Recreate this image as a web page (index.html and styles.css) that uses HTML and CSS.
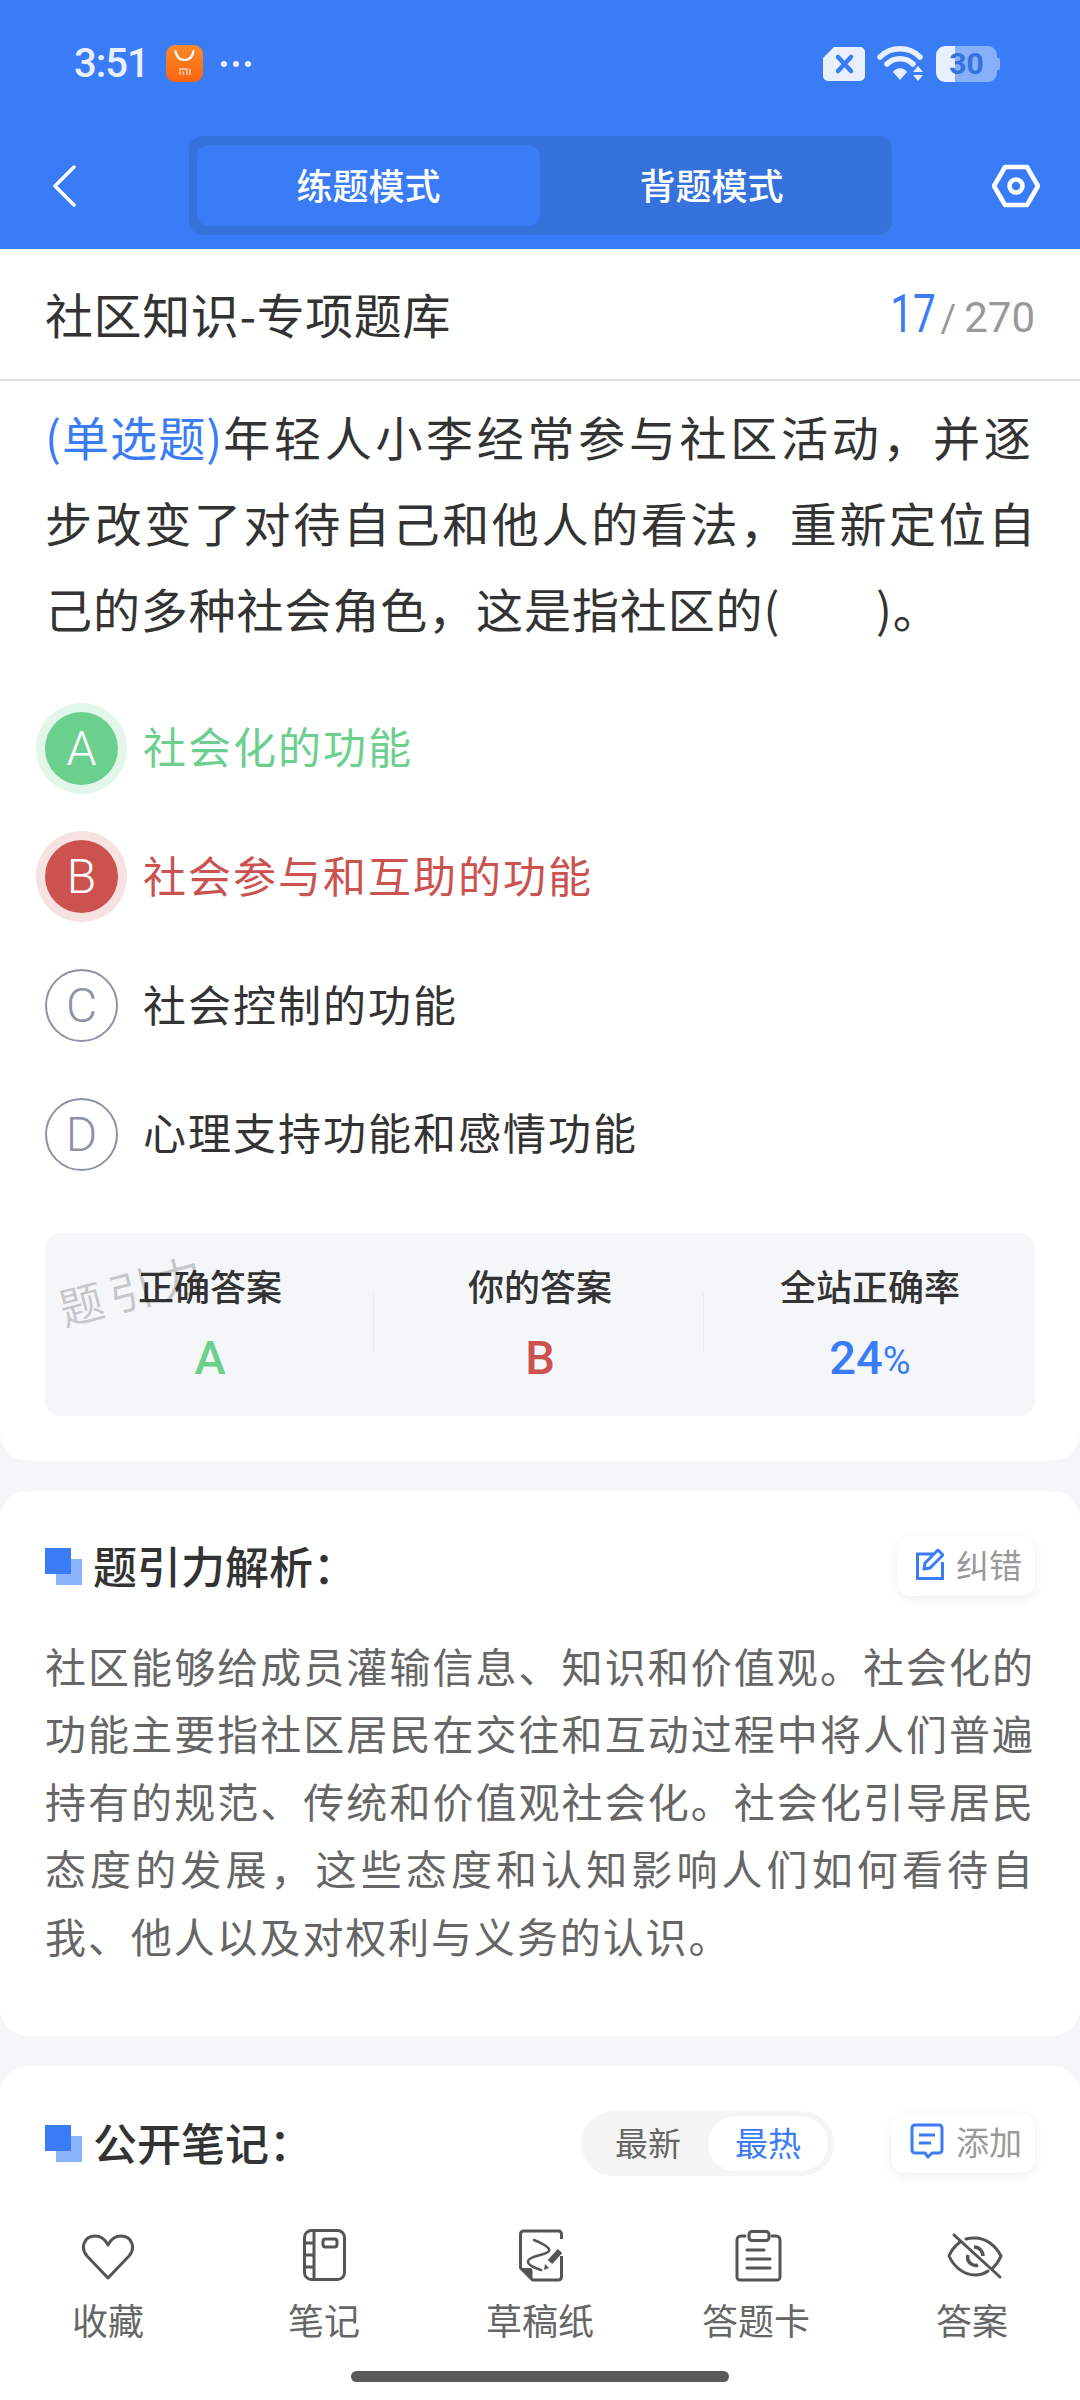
FILE: index.html
```html
<!DOCTYPE html>
<html>

<head>
	<title>社区知识-专项题库</title>
	<link rel="stylesheet" href="styles.css">
</head>

<body>
	<div class="page">
		<header class="top">
			<div class="statusbar">
				<div class="status-left">
					<span class="time">3:51</span>
					<svg class="mi-icon" width="37" height="37" viewBox="0 0 37 37">
						<defs>
							<linearGradient id="miFill" x1="0" y1="0" x2="0" y2="1">
								<stop offset="0" stop-color="#f98a2c" />
								<stop offset="1" stop-color="#fa6410" />
							</linearGradient>
						</defs>
						<rect width="37" height="37" rx="9" fill="url(#miFill)" />
						<path d="M9.500 6c1 6 4.500 9 9 9s8-3 9-9" fill="none" stroke="#fff" stroke-width="2.200" stroke-linecap="round" />
						<path d="M14 30v-6h7v6M17.500 26.500V30M24 24v6" fill="none" stroke="#ffd9b8" stroke-width="1.400" />
					</svg>
					<svg class="more-dots" width="32" height="8" viewBox="0 0 32 8">
						<circle cx="4" cy="4" r="3" fill="#e8effd" />
						<circle cx="16" cy="4" r="3" fill="#e8effd" />
						<circle cx="28" cy="4" r="3" fill="#e8effd" />
					</svg>
				</div>
				<div class="status-right">
					<svg width="44" height="36" viewBox="0 0 44 36">
						<path d="M12 1h26a5 5 0 0 1 5 5v24a5 5 0 0 1-5 5H6a5 5 0 0 1-5-5V12z" fill="#e8effd" />
						<path d="M16 11l13 14M29 11L16 25" stroke="#3a7cf6" stroke-width="4.500" stroke-linecap="round" />
					</svg>
					<svg width="48" height="36" viewBox="0 0 48 36">
						<path d="M3 11C14 0 32 0 43 11" fill="none" stroke="#e8effd" stroke-width="5.500" stroke-linecap="round" />
						<path d="M10 18c7-7 19-7 26 0" fill="none" stroke="#e8effd" stroke-width="5.500" stroke-linecap="round" />
						<path d="M16 26c4-5 10-5 14 0l-7 8z" fill="#e8effd" />
						<path d="M36 26l5-6 5 6zM36 29l5 6 5-6z" fill="#e8effd" />
					</svg>
					<div class="battery">30</div>
				</div>
			</div>
			<nav class="navbar">
				<svg class="back" width="24" height="42" viewBox="0 0 24 42">
					<path d="M22 2L3 21l19 19" fill="none" stroke="#fff" stroke-width="3.500" stroke-linecap="round" stroke-linejoin="round" />
				</svg>
				<div class="mode-tabs">
					<div class="mode-tab mode-tab-on">练题模式</div>
					<div class="mode-tab">背题模式</div>
				</div>
				<svg class="gear" width="48" height="44" viewBox="0 0 48 44">
					<path d="M13 3h22l11 19-11 19H13L2 22z" fill="none" stroke="#fff" stroke-width="4.500" stroke-linejoin="round" />
					<circle cx="24" cy="22" r="6.500" fill="none" stroke="#fff" stroke-width="4.500" />
				</svg>
			</nav>
		</header>

		<section class="card card-question">
			<div class="subhead">
				<span class="bank-title">社区知识-专项题库</span>
				<span class="counter"><b>17</b><i>/</i>270</span>
			</div>
			<p class="question">
				<span class="qline qline-1"><span class="qtype">(单选题)</span>年轻人小李经常参与社区活动，并逐</span>
				<span class="qline qline-2">步改变了对待自己和他人的看法，重新定位自</span>
				<span class="qline qline-3">己的多种社会角色，这是指社区的(　　)。</span>
			</p>
			<ul class="options">
				<li class="option right"><span class="badge">A</span><span class="option-text">社会化的功能</span></li>
				<li class="option wrong"><span class="badge">B</span><span class="option-text">社会参与和互助的功能</span></li>
				<li class="option"><span class="badge">C</span><span class="option-text">社会控制的功能</span></li>
				<li class="option"><span class="badge">D</span><span class="option-text">心理支持功能和感情功能</span></li>
			</ul>
			<div class="stats">
				<div class="stat">
					<div class="stat-label">正确答案</div>
					<div class="stat-value green">A</div>
				</div>
				<div class="stat">
					<div class="stat-label">你的答案</div>
					<div class="stat-value red">B</div>
				</div>
				<div class="stat">
					<div class="stat-label">全站正确率</div>
					<div class="stat-value blue">24<small>%</small></div>
				</div>
				<span class="watermark">题引力</span>
			</div>
		</section>

		<section class="card card-analysis">
			<div class="section-head">
				<h2 class="section-title"><span class="squares"></span>题引力解析：</h2>
				<div class="chip">
					<svg width="28" height="32" viewBox="0 0 28 32">
						<path d="M17 6H1.500v24.500h25V14" fill="none" stroke="#3a7cf6" stroke-width="3" />
						<path d="M9 15L22 2l5 5-13 13-6 1z" fill="none" stroke="#3a7cf6" stroke-width="3" stroke-linejoin="round" />
					</svg>
					纠错
				</div>
			</div>
			<p class="analysis">社区能够给成员灌输信息、知识和价值观。社会化的功能主要指社区居民在交往和互动过程中将人们普遍持有的规范、传统和价值观社会化。社会化引导居民态度的发展，这些态度和认知影响人们如何看待自我、他人以及对权利与义务的认识。</p>
		</section>

		<section class="card card-notes">
			<div class="section-head">
				<h2 class="section-title"><span class="squares"></span>公开笔记：</h2>
				<div class="notes-tools">
					<div class="sort">
						<span class="sort-item">最新</span>
						<span class="sort-item sort-on">最热</span>
					</div>
					<div class="chip">
						<svg width="34" height="36" viewBox="0 0 34 36">
							<path d="M5 2h24a3 3 0 0 1 3 3v22a3 3 0 0 1-3 3h-7l-4 4-3-4H5a3 3 0 0 1-3-3V5a3 3 0 0 1 3-3z" fill="none" stroke="#3a7cf6" stroke-width="3" stroke-linejoin="round" />
							<path d="M9 12h16M9 20h12" stroke="#3a7cf6" stroke-width="3" />
						</svg>
						添加
					</div>
				</div>
			</div>
		</section>

		<footer class="tabbar">
			<div class="tab">
				<svg width="54" height="54" viewBox="0 0 54 54">
					<path d="M27 50L6 28C-1 20 3 8 14 8c6 0 10 3 13 9 3-6 7-9 13-9 11 0 15 12 8 20z" fill="none" stroke="#555" stroke-width="3" stroke-linejoin="round" />
				</svg>
				<span>收藏</span>
			</div>
			<div class="tab">
				<svg width="54" height="54" viewBox="0 0 54 54">
					<rect x="7.500" y="2.500" width="40" height="49" rx="7" fill="none" stroke="#555" stroke-width="3" />
					<path d="M17 2.500v49M7.500 15H17M7.500 27H17M7.500 39H17" stroke="#555" stroke-width="3" />
					<rect x="26" y="11" width="14" height="8" rx="2.500" fill="none" stroke="#555" stroke-width="3" />
				</svg>
				<span>笔记</span>
			</div>
			<div class="tab">
				<svg width="54" height="54" viewBox="0 0 54 54">
					<path d="M48.500 11V6a3 3 0 0 0-3-3H10.500a3 3 0 0 0-3 3v34l12 12h26a3 3 0 0 0 3-3V28" fill="none" stroke="#555" stroke-width="3" stroke-linejoin="round" />
					<path d="M7.500 40h9a3 3 0 0 1 3 3v9z" fill="#555" />
					<path d="M21 12c8 3 17 8 15 11-2 4-20 5-21 10-1 4 7 7 13 9" fill="none" stroke="#555" stroke-width="2.500" stroke-linecap="round" />
					<path d="M47 23L37 34" stroke="#555" stroke-width="6" />
					<path d="M32 36l4 4-5 2z" fill="#555" />
				</svg>
				<span>草稿纸</span>
			</div>
			<div class="tab">
				<svg width="54" height="54" viewBox="0 0 54 54">
					<path d="M16 8h-4a4 4 0 0 0-4 4v37a3 3 0 0 0 3 3h37a3 3 0 0 0 3-3V12a4 4 0 0 0-4-4h-4" fill="none" stroke="#555" stroke-width="3" stroke-linecap="round" />
					<rect x="20" y="3.500" width="20" height="9" rx="3" fill="none" stroke="#555" stroke-width="3" />
					<path d="M18 22h17M18 31h23M18 40h23" stroke="#555" stroke-width="3" stroke-linecap="round" />
				</svg>
				<span>答题卡</span>
			</div>
			<div class="tab">
				<svg class="eye" width="58" height="54" viewBox="0 0 58 54">
					<path d="M14 14C9 18 5 23 3 28c5 11 15 19 26 19 5 0 9-1 13-4" fill="none" stroke="#555" stroke-width="3" stroke-linecap="round" />
					<path d="M20 11c3-1 6-1 9-1 11 0 21 8 26 18-2 5-5 9-9 13" fill="none" stroke="#555" stroke-width="3" stroke-linecap="round" />
					<path d="M22 27a8 8 0 0 0 10 10M28 19a9 9 0 0 1 9 9" fill="none" stroke="#555" stroke-width="3.500" />
					<path d="M8 7l46 42" stroke="#555" stroke-width="3" stroke-linecap="round" />
				</svg>
				<span>答案</span>
			</div>
			<div class="home-bar"></div>
		</footer>
	</div>
</body>

</html>
```

FILE: styles.css
```css
* {
	box-sizing: border-box;
}

body {
	margin: 0;
	font-family: "Noto Sans CJK SC", "Noto Sans", sans-serif;
	color: #333;
	background: #f4f6f8;
}

.page {
	width: 1080px;
	height: 2400px;
	overflow: hidden;
	display: flex;
	flex-direction: column;
}

/* header */
.top {
	height: 249px;
	flex: none;
	background: #3a7cf6;
	color: #fff;
}

.statusbar {
	height: 126px;
	padding: 45px 80px 0 74px;
	display: flex;
	justify-content: space-between;
	align-items: flex-start;
}

.status-left,
.status-right {
	display: flex;
	align-items: center;
	height: 37px;
}

.time {
	font-family: Roboto, sans-serif;
	font-size: 40px;
	font-weight: 500;
	letter-spacing: -1px;
	color: #e8effd;
	width: 92px;
}

.more-dots {
	margin-left: 17px;
}

.status-right {
	gap: 11px;
}

.battery {
	position: relative;
	width: 61px;
	height: 36px;
	margin-right: 3px;
	border-radius: 9px;
	background: linear-gradient(90deg, #e8effd 19px, #86b0fa 19px);
	font-family: Roboto, sans-serif;
	font-size: 30px;
	font-weight: 700;
	color: #3672dc;
	text-align: center;
	line-height: 36px;
}

.battery::after {
	content: "";
	position: absolute;
	right: -3px;
	top: 12px;
	width: 3px;
	height: 12px;
	border-radius: 0 2px 2px 0;
	background: #86b0fa;
}

.navbar {
	height: 123px;
	padding: 10px 40px 14px 52px;
	display: flex;
	align-items: center;
}

.mode-tabs {
	width: 703px;
	height: 99px;
	margin: 0 auto 0 113px;
	padding: 9px 8px;
	background: #3672dc;
	border-radius: 14px;
	display: flex;
}

.mode-tab {
	width: 343px;
	padding-bottom: 4px;
	border-radius: 12px;
	font-size: 36px;
	font-weight: 500;
	display: flex;
	align-items: center;
	justify-content: center;
}

.mode-tab-on {
	background: #3a7cf6;
}

/* cards */
.card {
	background: #fff;
	border-radius: 28px;
	padding: 0 45px;
	margin-bottom: 30px;
	flex: none;
}

.card-question {
	height: 1212px;
	border-radius: 0 0 28px 28px;
}

.subhead {
	height: 132px;
	margin: 0 -45px;
	padding: 0 45px 2px;
	border-bottom: 2px solid #e4e4e4;
	display: flex;
	align-items: center;
	justify-content: space-between;
}

.bank-title {
	font-size: 48px;
	letter-spacing: .6px;
}

.counter {
	font-family: Roboto, sans-serif;
	font-size: 42px;
	color: #999;
}

.counter b {
	display: inline-block;
	font-size: 54px;
	font-weight: 400;
	color: #3a7cf6;
	transform: scaleX(.75);
	transform-origin: right;
}

.counter i {
	font-style: normal;
	font-size: 38px;
	margin: 0 8px 0 5px;
}

.question {
	margin: 12px 0 0;
	font-size: 47px;
	line-height: 86px;
}

.qline {
	display: block;
	white-space: nowrap;
}

.qline-1 {
	letter-spacing: 3.700px;
}

.qline-2 {
	letter-spacing: 2.650px;
}

.qline-3 {
	letter-spacing: .9px;
}

.qtype {
	color: #3a7cf6;
	letter-spacing: 1.100px;
}

.options {
	list-style: none;
	margin: 33px 0 0;
	padding: 0;
}

.option {
	height: 128.670px;
	display: flex;
	align-items: center;
	font-size: 43px;
	letter-spacing: 2px;
}

.option-text {
	margin-bottom: 6px;
}

.badge {
	width: 73px;
	height: 73px;
	margin-right: 25px;
	border-radius: 50%;
	border: 2px solid #8e92a8;
	color: #8e92a8;
	font-family: Roboto, sans-serif;
	font-size: 48px;
	font-weight: 300;
	letter-spacing: 0;
	display: flex;
	align-items: center;
	justify-content: center;
	flex: none;
}

.right {
	color: #6bcf8d;
}

.right .badge {
	background: #6bcf8d;
	border: none;
	color: #fff;
	box-shadow: 0 0 0 9px #e2f6e9;
}

.wrong {
	color: #cb524f;
}

.wrong .badge {
	background: #cb524f;
	border: none;
	color: #fff;
	box-shadow: 0 0 0 9px #f7e2e2;
}

.stats {
	position: relative;
	height: 183px;
	margin-top: 34px;
	padding-top: 27px;
	background: #f4f6f8;
	border-radius: 16px;
	display: flex;
}

.stat {
	flex: 1;
	text-align: center;
	position: relative;
}

.stat + .stat::before {
	content: "";
	position: absolute;
	left: -2px;
	top: 33px;
	height: 60px;
	width: 1px;
	background: #e9ebee;
}

.stat-label {
	font-size: 36px;
	font-weight: 500;
	line-height: 50px;
}

.stat-value {
	margin-top: 20px;
	font-family: Roboto, sans-serif;
	font-size: 47px;
	font-weight: 500;
	line-height: 56px;
}

.stat-value small {
	font-size: 38px;
	font-weight: 400;
}

.green {
	color: #6bcf8d;
}

.red {
	color: #cb524f;
}

.blue {
	color: #3a7cf6;
}

.watermark {
	position: absolute;
	left: 12px;
	top: 23px;
	font-size: 44px;
	letter-spacing: 7px;
	color: rgba(0, 0, 0, .2);
	transform: rotate(-15deg);
}

.card-analysis {
	height: 545px;
	padding-top: 45px;
}

.section-head {
	height: 60px;
	display: flex;
	align-items: center;
	justify-content: space-between;
}

.section-title {
	margin: 0;
	padding-bottom: 2px;
	font-size: 44px;
	font-weight: 500;
	display: flex;
	align-items: center;
}

.squares {
	position: relative;
	width: 37px;
	height: 37px;
	margin: 2px 11px 0 0;
}

.squares::before,
.squares::after {
	content: "";
	position: absolute;
}

.squares::before {
	right: 0;
	bottom: 0;
	width: 26px;
	height: 26px;
	background: #8ab4fa;
}

.squares::after {
	left: 0;
	top: 0;
	width: 26px;
	height: 26px;
	background: #3a7cf6;
}

.chip {
	height: 60px;
	padding: 0 13px 4px 19px;
	background: #fff;
	border-radius: 14px;
	box-shadow: 0 3px 12px rgba(0, 0, 0, .07);
	font-size: 33px;
	color: #999;
	display: flex;
	align-items: center;
	gap: 12px;
}

.analysis {
	margin: 36px 0 0;
	font-size: 41px;
	line-height: 67.400px;
	letter-spacing: 1.900px;
	color: #666;
	text-align: justify;
}

.card-notes {
	height: 124px;
	margin-bottom: 0;
	border-radius: 28px 28px 0 0;
	padding-top: 47px;
}

.notes-tools {
	display: flex;
	align-items: center;
	gap: 57px;
}

.sort {
	width: 253px;
	height: 65px;
	padding: 5px 6px 5px 0;
	background: #f5f5f5;
	border-radius: 33px;
	display: flex;
	justify-content: flex-end;
	font-size: 33px;
	color: #666;
}

.sort-item {
	width: 120px;
	padding-bottom: 2px;
	display: flex;
	align-items: center;
	justify-content: center;
	border-radius: 28px;
}

.sort-on {
	background: #fff;
	color: #3a7cf6;
}

/* bottom tabs */
.tabbar {
	position: relative;
	flex: 1;
	background: #fff;
	padding-top: 38px;
	display: flex;
}

.tab {
	flex: 1;
	display: flex;
	flex-direction: column;
	align-items: center;
	font-size: 36px;
	color: #666;
}

.tab span {
	margin-top: 12px;
	line-height: 50px;
}

.eye {
	margin-left: 6px;
}

.home-bar {
	position: absolute;
	left: 351px;
	bottom: 18px;
	width: 378px;
	height: 11px;
	border-radius: 6px;
	background: #5a5a5a;
}
```
